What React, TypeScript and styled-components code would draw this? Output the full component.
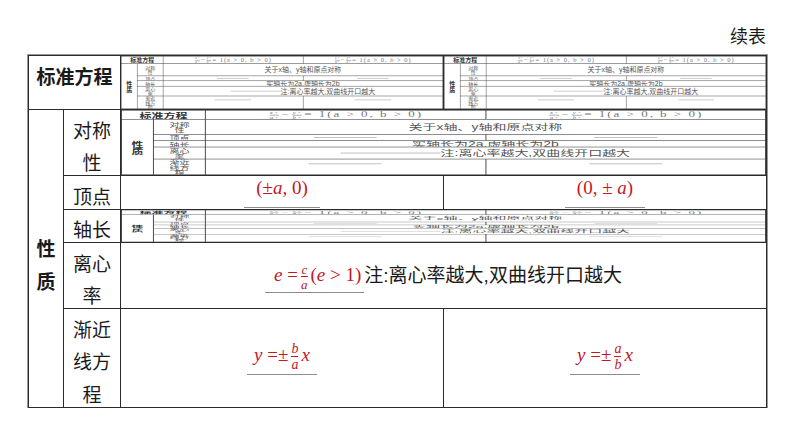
import React from "react";
import styled, { createGlobalStyle } from "styled-components";

const GlobalStyle = createGlobalStyle`
  html, body {
    margin: 0;
    padding: 0;
    background: #fff;
  }
  body {
    font-family: "Liberation Sans", "Noto Sans CJK SC", sans-serif;
    color: #1a1a1a;
  }
`;

const RED = "#c8161e";

const Page = styled.div`
  padding: 24px 0 0 28px;
`;

const Caption = styled.div`
  width: 738px;
  display: flex;
  justify-content: flex-end;
  font-size: 18px;
  line-height: 26px;
  margin-bottom: 5px;
`;

const Table = styled.div`
  display: grid;
  grid-template-columns: 34px 56px 322px 322px;
  grid-template-rows: 53px 65px 33px 32px 65px 98px;
  gap: 1px;
  padding: 1px;
  width: max-content;
  background: #2b2b2b;
  box-shadow: 0 0 0 1px #9a9a9a;
`;

const Cell = styled.div<{ $col: string; $row: string }>`
  grid-column: ${(p) => p.$col};
  grid-row: ${(p) => p.$row};
  background: #fff;
  display: flex;
  align-items: center;
  justify-content: center;
  min-width: 0;
  min-height: 0;
  overflow: hidden;
`;

const MiniCell = styled(Cell)`
  display: block;
`;

const HeadLabel = styled.div<{ $shift: number }>`
  font-family: "Noto Sans CJK SC", sans-serif;
  font-weight: 700;
  font-size: 19px;
  line-height: 33px;
  text-align: center;
  transform: translateY(${(p) => p.$shift}px);
`;

const Label = styled.div`
  font-family: "Noto Sans CJK SC", sans-serif;
  font-size: 19px;
  line-height: 32.5px;
  text-align: center;
  white-space: pre-line;
  padding-top: 7px;
`;

const Blank = styled.span<{ $pl: number; $pr: number; $pb: number }>`
  display: inline-block;
  padding: 0 ${(p) => p.$pr}px ${(p) => p.$pb}px ${(p) => p.$pl}px;
  border-bottom: 1px solid #8c8c8c;
  color: ${RED};
  font-family: "Liberation Serif", serif;
  font-size: 19px;
  line-height: 22px;
  white-space: nowrap;
`;

const V = styled.i`
  font-style: italic;
`;

const Frac = styled.span<{ $size?: number }>`
  display: inline-flex;
  flex-direction: column;
  align-items: center;
  vertical-align: middle;
  font-size: ${(p) => p.$size ?? 13}px;
  line-height: ${(p) => p.$size ?? 13}px;
  font-style: italic;
  margin: 0 3px;
  & > span + span {
    border-top: 1px solid currentColor;
    padding-top: 1px;
  }
`;

const Line = styled.div`
  white-space: nowrap;
  padding-top: 2px;
`;

const Note = styled.span`
  font-size: 19px;
  color: #1a1a1a;
`;

/* --- scaled-down copy of the table that sits in some cells --- */

const MiniGrid = styled.div<{ $sx: number; $sy: number }>`
  box-sizing: border-box;
  width: 646px;
  height: 108px;
  transform: scale(${(p) => p.$sx}, ${(p) => p.$sy});
  transform-origin: 0 0;
  display: grid;
  grid-template-columns: 31px 51px 1fr 1fr;
  grid-template-rows: 14px 24px 9px 10px 19px 1fr;
  gap: 1px;
  padding: 1px;
  background: #4a4a4a;
  color: #555;
  font-size: 14px;
`;

const MCell = styled.div<{ $col: string; $row: string; $end?: boolean }>`
  grid-column: ${(p) => p.$col};
  grid-row: ${(p) => p.$row};
  background: #fff;
  display: flex;
  align-items: ${(p) => (p.$end ? "flex-end" : "center")};
  justify-content: center;
  padding-bottom: ${(p) => (p.$end ? "10px" : "0")};
  overflow: hidden;
`;

const MiniHead = styled.div`
  font-family: "Noto Sans CJK SC", sans-serif;
  font-weight: 700;
  font-size: 12px;
  line-height: 12px;
  text-align: center;
  color: #333;
`;

const MiniLabel = styled.div`
  font-family: "Noto Sans CJK SC", sans-serif;
  font-size: 10px;
  line-height: 9px;
  text-align: center;
  white-space: pre-line;
`;

const MiniText = styled.span`
  white-space: nowrap;
  line-height: 1;
`;

const MiniEqText = styled.span`
  font-family: "Liberation Serif", serif;
  font-size: 13px;
  letter-spacing: 2px;
  white-space: nowrap;
  color: #777;
`;

const MiniFrac = styled(Frac)`
  font-size: 7px;
  line-height: 6px;
  margin: 0 2px;
`;

const MiniBlank = styled.span<{ $w: number }>`
  display: inline-block;
  width: ${(p) => p.$w}px;
  border-bottom: 1px solid #999;
  align-self: center;
`;

const MiniEq = () => (
  <MiniEqText>
    <MiniFrac>
      <span>x²</span>
      <span>a²</span>
    </MiniFrac>
    −
    <MiniFrac>
      <span>y²</span>
      <span>b²</span>
    </MiniFrac>
    = 1(a &gt; 0, b &gt; 0)
  </MiniEqText>
);

const subLabels = ["对称\n性", "顶点", "轴长", "离心\n率", "渐近\n线方\n程"];

const MiniTable = ({ sx, sy }: { sx: number; sy: number }) => (
  <MiniGrid $sx={sx} $sy={sy}>
    <MCell $col="1 / 3" $row="1">
      <MiniHead>标准方程</MiniHead>
    </MCell>
    <MCell $col="3" $row="1">
      <MiniEq />
    </MCell>
    <MCell $col="4" $row="1">
      <MiniEq />
    </MCell>
    <MCell $col="1" $row="2 / 7">
      <MiniHead>
        性<br />质
      </MiniHead>
    </MCell>
    {subLabels.map((l, i) => (
      <MCell key={l} $col="2" $row={`${i + 2}`}>
        <MiniLabel>{l}</MiniLabel>
      </MCell>
    ))}
    <MCell $col="3 / 5" $row="2">
      <MiniText>关于x轴、y轴和原点对称</MiniText>
    </MCell>
    <MCell $col="3" $row="3">
      <MiniBlank $w={63} />
    </MCell>
    <MCell $col="4" $row="3">
      <MiniBlank $w={63} />
    </MCell>
    <MCell $col="3 / 5" $row="4">
      <MiniText>实轴长为2a,虚轴长为2b</MiniText>
    </MCell>
    <MCell $col="3 / 5" $row="5">
      <MiniBlank $w={100} />
      <MiniText>注:离心率越大,双曲线开口越大</MiniText>
    </MCell>
    <MCell $col="3" $row="6" $end>
      <MiniBlank $w={73} />
    </MCell>
    <MCell $col="4" $row="6" $end>
      <MiniBlank $w={73} />
    </MCell>
  </MiniGrid>
);

export default function App() {
  return (
    <>
      <GlobalStyle />
      <Page>
        <Caption>续表</Caption>
        <Table>
          <Cell $col="1 / 3" $row="1">
            <HeadLabel $shift={-7}>标准方程</HeadLabel>
          </Cell>
          <MiniCell $col="3" $row="1">
            <MiniTable sx={322 / 646} sy={53 / 108} />
          </MiniCell>
          <MiniCell $col="4" $row="1">
            <MiniTable sx={322 / 646} sy={53 / 108} />
          </MiniCell>

          <Cell $col="1" $row="2 / 7">
            <HeadLabel $shift={5}>
              性<br />质
            </HeadLabel>
          </Cell>

          <Cell $col="2" $row="2">
            <Label>{"对称\n性"}</Label>
          </Cell>
          <MiniCell $col="3 / 5" $row="2">
            <MiniTable sx={645 / 646} sy={65 / 108} />
          </MiniCell>

          <Cell $col="2" $row="3">
            <Label>顶点</Label>
          </Cell>
          <Cell $col="3" $row="3">
            <Blank $pl={12} $pr={12} $pb={8}>
              (±<V>a</V>, 0)
            </Blank>
          </Cell>
          <Cell $col="4" $row="3">
            <Blank $pl={12} $pr={12} $pb={8}>
              (0, ± <V>a</V>)
            </Blank>
          </Cell>

          <Cell $col="2" $row="4">
            <Label>轴长</Label>
          </Cell>
          <MiniCell $col="3 / 5" $row="4">
            <MiniTable sx={645 / 646} sy={32 / 108} />
          </MiniCell>

          <Cell $col="2" $row="5">
            <Label>{"离心\n率"}</Label>
          </Cell>
          <Cell $col="3 / 5" $row="5">
            <Line>
              <Blank $pl={9} $pr={3} $pb={1}>
                <V>e</V> =
                <Frac $size={13}>
                  <span>c</span>
                  <span>a</span>
                </Frac>
                (<V>e</V> &gt; 1)
              </Blank>
              <Note>注:离心率越大,双曲线开口越大</Note>
            </Line>
          </Cell>

          <Cell $col="2" $row="6">
            <Label>{"渐近\n线方\n程"}</Label>
          </Cell>
          <Cell $col="3" $row="6">
            <Blank $pl={7} $pr={7} $pb={2}>
              <V>y</V> =±
              <Frac $size={14}>
                <span>b</span>
                <span>a</span>
              </Frac>
              <V>x</V>
            </Blank>
          </Cell>
          <Cell $col="4" $row="6">
            <Blank $pl={7} $pr={7} $pb={2}>
              <V>y</V> =±
              <Frac $size={14}>
                <span>a</span>
                <span>b</span>
              </Frac>
              <V>x</V>
            </Blank>
          </Cell>
        </Table>
      </Page>
    </>
  );
}
